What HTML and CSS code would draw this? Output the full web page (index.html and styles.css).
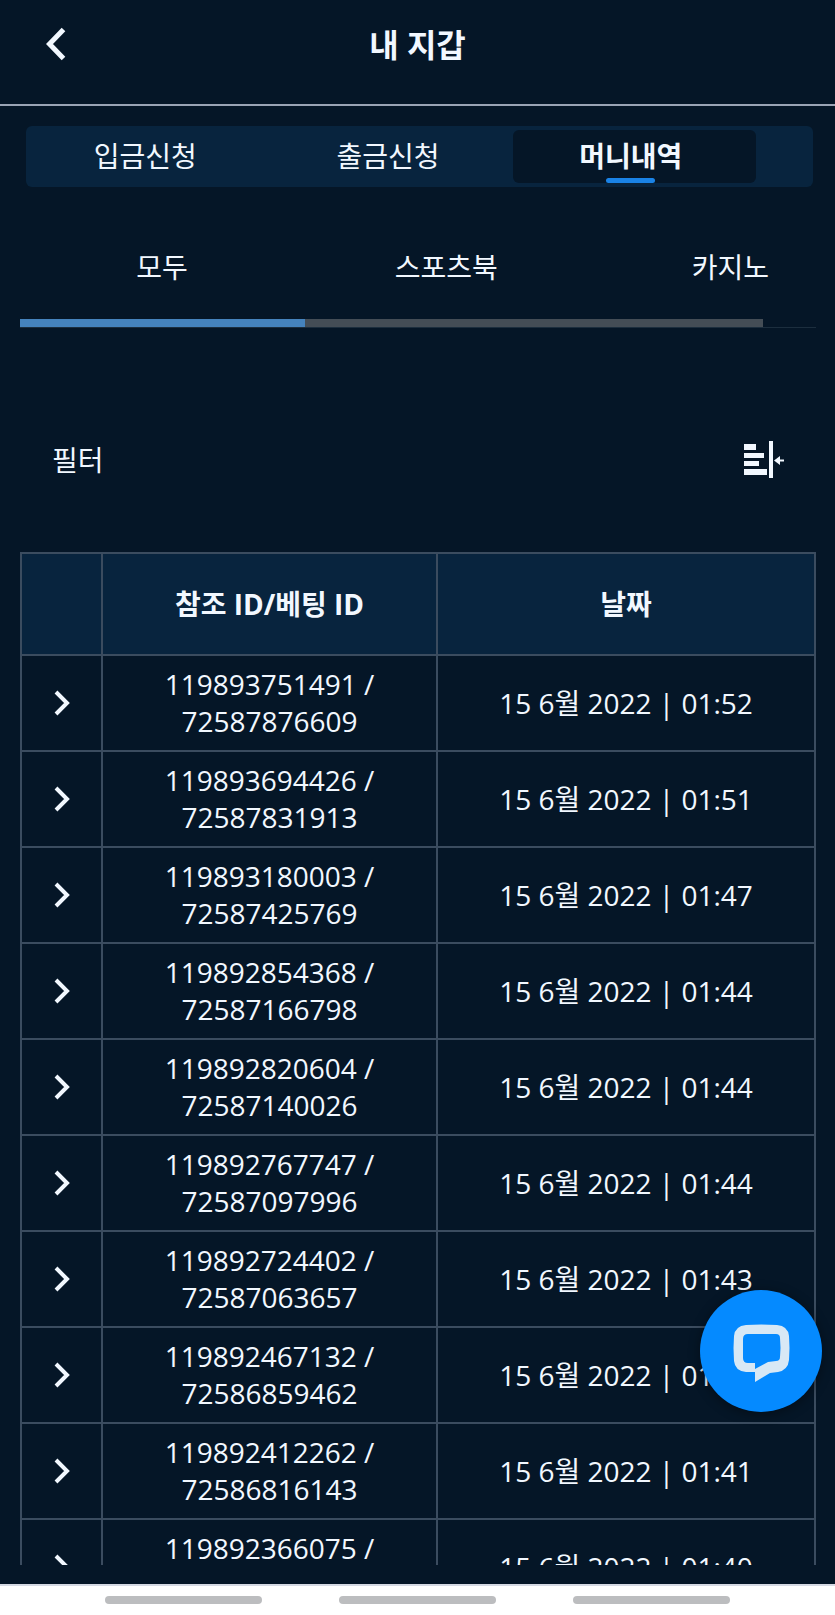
FILE: index.html
```html
<!DOCTYPE html>
<html lang="ko">
<head>
  <meta charset="UTF-8" />
  <meta name="viewport" content="width=device-width, initial-scale=1" />
  <title>내 지갑</title>
  <link rel="stylesheet" href="styles.css">
</head>
<body>
  <header class="header">
    <button class="back-btn" type="button" aria-label="뒤로">
      <svg width="20" height="34" viewBox="0 0 20 34"><path d="M17.500 2.500 3.500 17l14 14.500" fill="none" stroke="currentColor" stroke-width="5"/></svg>
    </button>
    <h1>내 지갑</h1>
  </header>

  <main class="content">
    <nav class="tabs">
      <a href="#deposit" class="tab">입금신청</a>
      <a href="#withdraw" class="tab">출금신청</a>
      <a href="#history" class="tab active">머니내역</a>
    </nav>

    <div class="categories">
      <div class="category-list">
        <a href="#all" class="category">모두</a>
        <a href="#sports" class="category">스포츠북</a>
        <a href="#casino" class="category">카지노</a>
      </div>
      <div class="track"><div class="thumb"></div></div>
    </div>

    <div class="filter">
      <span>필터</span>
      <button class="filter-btn" type="button" aria-label="필터">
        <svg width="40" height="38" viewBox="0 0 40 38" fill="currentColor">
          <path d="M0 3h12v6H0zM0 12h20v5H0zM0 20h15v5H0zM0 28h23v6H0zM25 0h4v37h-4z"/>
          <path d="M30 19.500l6-4.500v3.500h4v2h-4V24z"/>
        </svg>
      </button>
    </div>

    <table class="history">
      <thead>
        <tr>
          <th class="col-toggle"></th>
          <th class="col-id">참조 ID/베팅 ID</th>
          <th>날짜</th>
        </tr>
      </thead>
      <tbody id="historyRows"></tbody>
    </table>
  </main>

  <button class="chat-btn" type="button" aria-label="채팅">
    <svg width="57" height="58" viewBox="0 0 57 58">
      <path fill="currentColor" fill-rule="evenodd" d="M13 1Q28 0 44 1Q55 2 56 12Q57 24 56 36Q55 46 45 48L37 49L22 58V48H13Q2 47 1 37Q0 24 1 12Q2 2 13 1ZM15 10Q10 10 10 15V34Q10 39 15 39H22V45L35 38L43 37Q47 37 47 33Q48 24 47 14Q47 10 43 10Z"/>
    </svg>
  </button>

  <footer class="system-nav">
    <span class="nav-bar"></span>
    <span class="nav-bar"></span>
    <span class="nav-bar"></span>
  </footer>

  <script src="script.js"></script>
</body>
</html>
```

FILE: styles.css
```css
/* Reset */
* {
  margin: 0; padding: 0; box-sizing: border-box;
}
body {
  background: #051627;
  color: #f2f8ff;
  font-family: "Open Sans", "Noto Sans CJK KR", sans-serif;
  font-size: 28px;
  line-height: 37px;
  height: 100vh;
  overflow: hidden;
  display: flex;
  flex-direction: column;
}
a {
  color: inherit;
  text-decoration: none;
}
button {
  background: none;
  border: none;
  color: inherit;
  cursor: pointer;
}
svg {
  display: block;
}
/* Header */
.header {
  flex: none;
  height: 106px;
  padding: 0 46px 16px;
  border-bottom: 2px solid #9aa4b5;
  display: grid;
  grid-template-columns: 40px 1fr 40px;
  align-items: center;
}
h1 {
  font-size: 32px;
  font-weight: bold;
  text-align: center;
}
/* Content */
.content {
  flex: 1;
  min-height: 0;
  overflow: hidden;
  padding: 20px 19px 0 20px;
  margin-bottom: 19px;
}
/* Tabs */
.tabs {
  display: flex;
  margin: 0 3px 0 6px;
  padding: 4px 2px;
  background: #08243e;
  border-radius: 6px;
}
.tab {
  flex: 0 0 31%;
  height: 53px;
  padding: 8px 8px 8px 0;
  border-radius: 6px;
  text-align: center;
}
.tab.active {
  background: #051627;
  font-weight: bold;
}
.tab.active::after {
  content: "";
  display: block;
  width: 49px;
  height: 5px;
  margin: 3px auto 0;
  border-radius: 3px;
  background: #1a83e6;
}
/* Categories */
.categories {
  margin-top: 62px;
  border-bottom: 1px solid #1c2e3e;
}
.category-list {
  display: flex;
  overflow: hidden;
}
.category {
  flex: 0 0 35.7%;
  height: 70px;
  text-align: center;
}
.track {
  width: 93.4%;
  height: 8px;
  background: #444d56;
}
.thumb {
  width: 38.3%;
  height: 100%;
  background: #4583bd;
}
/* Filter */
.filter {
  display: flex;
  justify-content: space-between;
  align-items: center;
  padding: 113px 32px 73px;
}
/* History table */
.history {
  width: 100%;
  table-layout: fixed;
  border-collapse: collapse;
  text-align: center;
}
.history th,
.history td {
  border: 2px solid #3b4c5f;
}
.history th {
  height: 102px;
  background: #08243e;
}
.history td {
  height: 96px;
}
.col-toggle {
  width: 81px;
}
.col-id {
  width: 42.2%;
}
.toggle-btn {
  display: block;
  margin: 0 auto;
}
/* Chat button */
.chat-btn {
  position: fixed;
  right: 13px;
  bottom: 203px;
  width: 122px;
  height: 122px;
  padding-top: 3px;
  border-radius: 50%;
  background: #058aff;
  color: #d8e8f5;
  box-shadow: 0 2px 12px rgba(0, 0, 0, 0.4);
  display: flex;
  justify-content: center;
  align-items: center;
}
/* System navigation */
.system-nav {
  flex: none;
  height: 31px;
  padding-bottom: 2px;
  background: #fff;
  border-top: 2px solid #d5d9e3;
  display: flex;
  justify-content: center;
  align-items: center;
  gap: 77px;
}
.nav-bar {
  width: 157px;
  height: 8px;
  border-radius: 4px;
  background: #bcbdbf;
}
```

FILE: script.js
```javascript
const historyData = [
  ['119893751491', '72587876609', '01:52'],
  ['119893694426', '72587831913', '01:51'],
  ['119893180003', '72587425769', '01:47'],
  ['119892854368', '72587166798', '01:44'],
  ['119892820604', '72587140026', '01:44'],
  ['119892767747', '72587097996', '01:44'],
  ['119892724402', '72587063657', '01:43'],
  ['119892467132', '72586859462', '01:41'],
  ['119892412262', '72586816143', '01:41'],
  ['119892366075', '72586779120', '01:40']
];

// Render one table row per transaction
document.getElementById('historyRows').innerHTML = historyData.map(([ref, bet, time]) => `
  <tr>
    <td>
      <button class="toggle-btn" type="button" aria-label="상세">
        <svg width="16" height="26" viewBox="0 0 16 26"><path d="M2 2l11 11L2 24" fill="none" stroke="currentColor" stroke-width="4"/></svg>
      </button>
    </td>
    <td>${ref} /<br>${bet}</td>
    <td>15 6월 2022 | ${time}</td>
  </tr>`).join('');
```
